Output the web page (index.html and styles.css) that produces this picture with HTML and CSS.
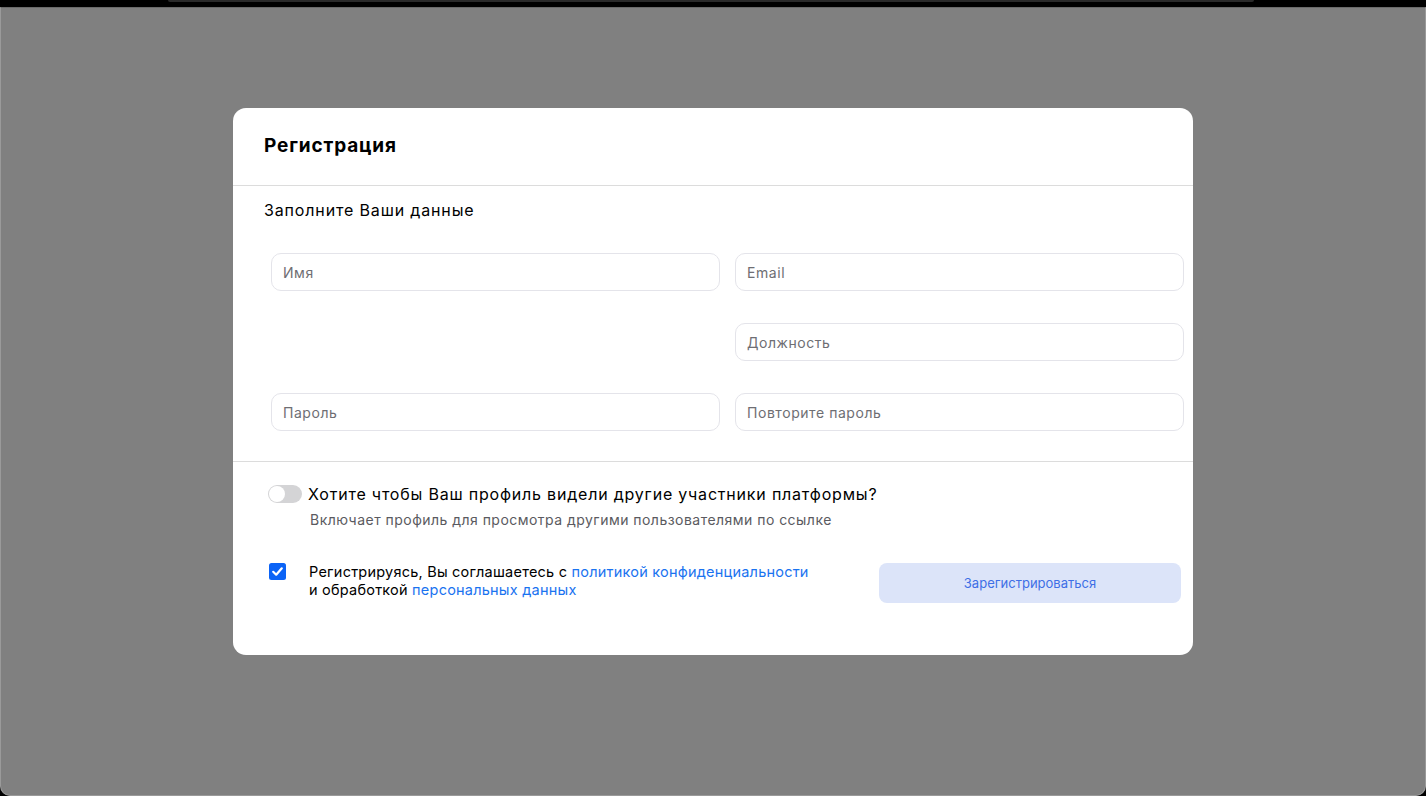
FILE: index.html
```html
<!DOCTYPE html>
<html lang="ru">
<head>
<meta charset="utf-8">
<link rel="stylesheet" href="styles.css">
<title>Регистрация</title>
</head>
<body>
<div class="topbar"><div class="topline"></div></div>
<div class="overlay">
  <div class="modal">
    <div class="modal-header"><h1 class="title">Регистрация</h1></div>
    <div class="modal-body">
      <p class="subtitle">Заполните Ваши данные</p>
      <div class="fields">
        <input class="field" type="text" placeholder="Имя">
        <input class="field" type="text" placeholder="Email">
        <div class="spacer"></div>
        <input class="field" type="text" placeholder="Должность">
        <input class="field" type="password" placeholder="Пароль">
        <input class="field" type="password" placeholder="Повторите пароль">
      </div>
    </div>
    <div class="modal-footer">
      <div class="toggle-row">
        <span class="toggle"><span class="knob"></span></span>
        <span class="toggle-label">Хотите чтобы Ваш профиль видели другие участники платформы?</span>
      </div>
      <p class="toggle-hint">Включает профиль для просмотра другими пользователями по ссылке</p>
      <div class="agree-row">
        <span class="checkbox">
          <svg width="17" height="17" viewBox="0 0 17 17"><rect width="17" height="17" rx="2.5" fill="#0b63f6"/><path d="M4.2 8.8 L7.2 11.7 L12.8 5.3" fill="none" stroke="#fff" stroke-width="2.2" stroke-linecap="round" stroke-linejoin="round"/></svg>
        </span>
        <p class="agree-text">Регистрируясь, Вы соглашаетесь с <a href="#">политикой конфиденциальности</a><br>и обработкой <a href="#">персональных данных</a></p>
        <button class="submit" type="button">Зарегистрироваться</button>
      </div>
    </div>
  </div>
</div>
</body>
</html>
```
FILE: styles.css
```css
* { box-sizing: border-box; }
html, body { margin: 0; padding: 0; }
body {
  background: #000;
  width: 1426px;
  height: 796px;
  overflow: hidden;
  font-family: Inter, "Noto Sans", sans-serif;
  display: flex;
  flex-direction: column;
}
.topbar {
  height: 7px;
  flex: none;
  padding: 0 172px 0 168px;
}
.topline {
  height: 2px;
  background: #2a2a2a;
  border-radius: 0 0 2px 2px;
}
.overlay {
  flex: 1;
  background: #808080;
  border: 1px solid #9a9a9a;
  border-top: 1px solid #6a6a6a;
  border-radius: 0 0 10px 10px;
  display: flex;
  justify-content: center;
  align-items: flex-start;
  padding-top: 100px;
}
.modal {
  width: 960px;
  height: 547px;
  background: #fff;
  border-radius: 13px;
  display: flex;
  flex-direction: column;
}
.modal-header {
  height: 78px;
  border-bottom: 1px solid #dcdcdc;
  padding: 0 31px 2px;
  display: flex;
  align-items: center;
}
.title {
  margin: 0;
  font-size: 19px;
  font-weight: 700;
  color: #000;
  letter-spacing: 0.85px;
}
.modal-body {
  padding: 14px 9px 30px 31px;
  border-bottom: 1px solid #dcdcdc;
}
.subtitle {
  margin: 0;
  font-size: 16px;
  line-height: 20px;
  color: #000;
  letter-spacing: 0.85px;
}
.fields {
  margin-top: 33px;
  padding-left: 7px;
  display: grid;
  grid-template-columns: 449px 449px;
  column-gap: 15px;
  row-gap: 32px;
}
.field {
  height: 38px;
  border: 1px solid #e4e4ea;
  border-radius: 10px;
  padding: 0 11px;
  font-family: inherit;
  font-size: 14px;
  letter-spacing: 0.55px;
  color: #222;
  background: #fff;
  outline: none;
}
.field::placeholder { color: #6e6e73; }
.modal-footer {
  padding: 22px 12px 0 35px;
}
.toggle-row {
  display: flex;
  align-items: center;
  gap: 6px;
}
.toggle {
  width: 34px;
  height: 18px;
  border-radius: 9px;
  background: #d4d4d6;
  position: relative;
  flex: none;
}
.knob {
  position: absolute;
  left: 1px;
  top: 1px;
  width: 16px;
  height: 16px;
  border-radius: 50%;
  background: #fff;
}
.toggle-label {
  font-size: 16px;
  line-height: 20px;
  color: #000;
  letter-spacing: 0.8px;
}
.toggle-hint {
  margin: 7px 0 0 42px;
  font-size: 14px;
  line-height: 18px;
  color: #5a5a60;
  letter-spacing: 0.47px;
}
.agree-row {
  margin-top: 34px;
  display: flex;
  align-items: flex-start;
}
.checkbox {
  width: 17px;
  height: 17px;
  margin-left: 1px;
  flex: none;
  display: block;
}
.checkbox svg { display: block; }
.agree-text {
  margin: 0 0 0 23px;
  font-size: 14.5px;
  line-height: 18px;
  color: #000;
  letter-spacing: 0.22px;
  flex: 1;
}
.agree-text a {
  color: #1a73f0;
  text-decoration: none;
}
.submit {
  width: 302px;
  height: 40px;
  border: none;
  border-radius: 8px;
  background: #dce4f9;
  color: #3e6fe6;
  font-family: inherit;
  font-size: 13px;
  cursor: pointer;
  flex: none;
}
```
